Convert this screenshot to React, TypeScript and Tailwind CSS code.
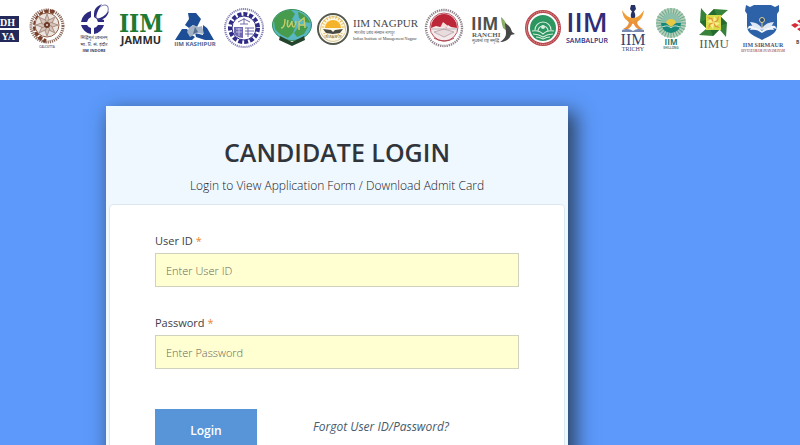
import React from 'react';

interface LogoProps {
  name: string;
  box: string;
  className: string;
  children: React.ReactNode;
}

const Logo: React.FC<LogoProps> = ({ name, box, className, children }) => (
  <svg role="img" aria-label={name} viewBox={box} className={`h-15 shrink-0 ${className}`}>
    {children}
  </svg>
);

const spin = (count: number, cx: number, cy: number, shape: React.ReactNode) =>
  Array.from({ length: count }, (_, i) => (
    <g key={i} transform={`rotate(${(360 / count) * i} ${cx} ${cy})`}>{shape}</g>
  ));

const sans = '"Open Sans", "Noto Sans", sans-serif';
const serif = '"Liberation Serif", serif';

const LogoStrip: React.FC = () => (
  <div className="flex items-start overflow-hidden">
    <Logo name="IIM Bodh Gaya" box="0 0 24 60" className="w-6">
      <rect x="0" y="16" width="19" height="12" fill="#23295a" />
      <rect x="0" y="30" width="19" height="12" fill="#23295a" />
      <g fill="#fff" fontFamily={serif} fontWeight="700" fontSize="10" textAnchor="end">
        <text x="15" y="26">DH</text>
        <text x="15" y="40">YA</text>
      </g>
    </Logo>

    <Logo name="IIM Calcutta" box="24 0 49 60" className="w-[49px]">
      <circle cx="47" cy="26" r="16" fill="none" stroke="#8b6a5c" strokeWidth="3" strokeDasharray="1.2 .9" />
      <path d="M54 12A15 15 0 1 0 46 41" fill="none" stroke="#7a3f2b" strokeWidth="4" strokeDasharray="4 1.5" />
      <circle cx="47" cy="25" r="12" fill="#ece4de" stroke="#94634e" strokeWidth="1" />
      {spin(8, 47, 25, <path d="M47 14l2.6 7-2.6 4-2.6-4z" fill="#d5c3b8" stroke="#95766a" strokeWidth=".7" />)}
      <circle cx="47" cy="25" r="3" fill="#6d3828" />
      <circle cx="47" cy="25" r="1" fill="#e8dcd4" />
      <text x="47" y="48" fontFamily={sans} fontWeight="700" fontSize="3" fill="#8c675a" textAnchor="middle">CALCUTTA</text>
    </Logo>

    <Logo name="IIM Indore" box="73 0 42 60" className="w-[42px]">
      <g fill="#2c2b80">
        <path d="M91 11v6a7 7 0 0 0-4 5h-6a13 13 0 0 1 10-11z" />
        <path d="M81 25h6a7 7 0 0 0 4 3v6a13 13 0 0 1-10-9z" />
        <path d="M94 34v-6a7 7 0 0 0 4-3h6a13 13 0 0 1-10 9z" />
        <path d="M94 12l3 5 7 3v2h-6a7 7 0 0 0-4-5z" />
      </g>
      <ellipse cx="102" cy="12" rx="5" ry="8" transform="rotate(38 102 12)" fill="#fff" stroke="#7b7aaf" strokeWidth="1" />
      <path d="M96 17c-4-5-1-10 6-13-4 5-5 9-6 13z" fill="#2c2b80" />
      <path d="M97 19c5 2 10-1 12-8-4 5-8 7-12 8z" fill="#2c2b80" />
      <g fontFamily={sans} fill="#37364f" textAnchor="middle">
        <text x="94" y="39" fontSize="4">सिद्धिमूलं प्रबन्धनम्</text>
        <text x="94" y="46" fontSize="5">भा. प्र. सं. इंदौर</text>
        <text x="94" y="52" fontWeight="700" fontSize="4">IIM INDORE</text>
      </g>
    </Logo>

    <Logo name="IIM Jammu" box="115 0 54 60" className="w-[54px]">
      <text x="141" y="32" fontFamily={'"DejaVu Serif Condensed", "DejaVu Serif", serif'} fontWeight="700" fontSize="24" fill="#1f7a34" textAnchor="middle">IIM</text>
      <text x="141" y="44" fontFamily={sans} fontWeight="700" fontSize="11" fill="#2b2d2e" textAnchor="middle">JAMMU</text>
    </Logo>

    <Logo name="IIM Kashipur" box="169 0 52 60" className="w-[52px]">
      <path d="M188 13h8l5 6-4 8-4-2-4 3-4-3 4-6z" fill="#1d4e95" />
      <path d="M203 25l4 3 7 12h-9l-9-3-1-4 8 2z" fill="#1d4e95" />
      <path d="M175 40l7-11h5l3 5 5 3-3 3z" fill="#1d4e95" />
      <path d="M189 28l4-3 5 2 4-1 2 8-7-1-7 4-3-5z" fill="#a3b2c5" />
      <path d="M195 27l3 5-5 2z" fill="#566f91" />
      <text x="195" y="46" fontFamily={sans} fontWeight="700" fontSize="6" fill="#4a6794" textAnchor="middle">IIM KASHIPUR</text>
    </Logo>

    <Logo name="IIM Visakhapatnam" box="221 0 48 60" className="w-12">
      <circle cx="244" cy="28" r="19" fill="none" stroke="#8380b8" strokeWidth="2" strokeDasharray="1.2 .8" />
      <circle cx="244" cy="28" r="14" fill="#fff" stroke="#2f2c86" strokeWidth="4" strokeDasharray="4 1.9" />
      <circle cx="244" cy="28" r="12" fill="#fff" stroke="#2f2c86" strokeWidth="1" />
      <path d="M238 22l6-3 6 3M244 18v6M240 24h8" fill="none" stroke="#6f6cab" strokeWidth="1" />
      <path d="M234 27h9v11c-5 0-8-3-9-5z" fill="#6d67b0" />
      <path d="M236 29h6M236 32h6M239 28v8" stroke="#d7d5ec" strokeWidth=".8" />
      <path d="M245 28h9M245 31h9M245 34h8M248 28v9" stroke="#5e5aa2" strokeWidth=".9" />
    </Logo>

    <Logo name="IIM Amritsar" box="269 0 46 60" className="w-[46px]">
      <ellipse cx="292" cy="25" rx="19.5" ry="15.5" fill="#58b7c4" stroke="#368e58" strokeWidth="1" />
      <path d="M274 20c4-7 11-10 17-10l4 4-3 5 4 6-3 8-5 5c-6-2-10-5-13-9z" fill="#469b4d" />
      <path d="M298 12c6 2 11 6 12 11l-5-1-6-4zM300 25l8 2-4 7-7 3-3-4z" fill="#469b4d" />
      <path d="M281 28c3 0 4-4 4-9M288 20c-2 9 1 9 4 1 0 8 3 8 4 0M299 30v-8l5-4 1 10M299 25h5" fill="none" stroke="#c3cb6b" strokeWidth="1.5" />
      <path d="M280 36l12 6 12-6 1 4-13 6-13-6z" fill="#24442c" />
    </Logo>

    <Logo name="IIM Nagpur" box="315 0 106 60" className="w-[106px]">
      <circle cx="333" cy="29" r="15" fill="#fff" stroke="#55594c" strokeWidth="2" />
      <circle cx="333" cy="29" r="12.5" fill="#fff8e5" stroke="#d8c893" strokeWidth="1" />
      <path d="M325 28a8 8 0 0 1 16 0z" fill="#f4b32b" />
      {spin(20, 333, 27, <path d="M333 15.5v3" stroke="#edb747" strokeWidth="1" />)}
      <path d="M321 29h24v4h-24z" fill="#fff8e5" />
      <path d="M323 29l8 1 2 2 2-2 8-1-3 4-7 1-7-1z" fill="#4a4b44" />
      <text x="333" y="38" fontFamily={sans} fontSize="3" fill="#66634f" textAnchor="middle">IIM NAGPUR</text>
      <text x="353" y="27" fontFamily={serif} fontSize="11" fill="#47484b">IIM NAGPUR</text>
      <text x="354" y="34" fontFamily={sans} fontSize="4" fill="#66686b">भारतीय प्रबंध संस्थान नागपुर</text>
      <text x="353" y="40" fontFamily={serif} fontSize="4" fill="#3b3d40">Indian Institute of Management Nagpur</text>
    </Logo>

    <Logo name="IIM Rohtak" box="421 0 47 60" className="w-[47px]">
      <circle cx="444" cy="28" r="18" fill="none" stroke="#8d8289" strokeWidth="2.4" strokeDasharray="1.3 .9" />
      <circle cx="444" cy="27" r="14" fill="#f4eaeb" stroke="#ba5863" strokeWidth="1" />
      <path d="M431 28a13 14 0 0 1 26 0l-6-1-3-2-2 3-3-3-3 2-4-1z" fill="#bd2638" />
      <path d="M443 22l5 4-3 2-4-2z" fill="#f7dede" />
      <path d="M431 29h26M434 32l10-3 10 3-10 5z" fill="#e9dcde" stroke="#a6979c" strokeWidth=".7" />
      <path d="M434 38c7 4 14 4 20 0" fill="none" stroke="#ad4451" strokeWidth="1" />
    </Logo>

    <Logo name="IIM Ranchi" box="468 0 51 60" className="w-[51px]">
      <text x="471" y="30" fontFamily={sans} fontWeight="700" fontSize="17" fill="#4d504d">IIM</text>
      <text x="472" y="37" fontFamily={serif} fontWeight="700" fontSize="7" fill="#5b5d5b">RANCHI</text>
      <text x="472" y="42" fontFamily={sans} fontSize="4" fill="#505350">सुप्रबन्धे राष्ट्र समृद्धि</text>
      <path d="M501 17c5 4 7 9 7 15l-5-4c-1-4-2-7-2-11z" fill="#8cad67" />
      <path d="M505 23c4 2 6 5 7 9l3 2-4 1c-2 5-6 7-11 7 4-3 6-5 6-9 0-4-1-7-1-10z" fill="#454846" />
    </Logo>

    <Logo name="IIM Raipur" box="519 0 45 60" className="w-[45px]">
      <circle cx="543" cy="28" r="16.5" fill="#fff" stroke="#b6464d" strokeWidth="3" />
      <circle cx="543" cy="28" r="16.5" fill="none" stroke="#edb2a6" strokeWidth="1" strokeDasharray="1 1" />
      <circle cx="543" cy="28" r="13" fill="#2c9560" />
      <g fill="none" stroke="#d9eee0" strokeWidth="1.1">
        <path d="M535 30a8 8 0 1 1 16 0M538 31a5 5 0 1 1 10 0" />
        <path d="M532 31c5-1 8 0 11 3 3-3 6-4 11-3M533 34c4 0 7 1 10 3 3-2 6-3 10-3M536 37c3 0 5 1 7 2 2-1 4-2 7-2" />
      </g>
      <circle cx="543" cy="27" r="2" fill="#d9eee0" />
    </Logo>

    <Logo name="IIM Sambalpur" box="564 0 52 60" className="w-[52px]">
      <text x="587" y="32" fontFamily={sans} fontWeight="600" fontSize="27" fill="#302c78" textAnchor="middle">IIM</text>
      <text x="587" y="43" fontFamily={sans} fontWeight="600" fontSize="7" fill="#302c78" textAnchor="middle">SAMBALPUR</text>
    </Logo>

    <Logo name="IIM Trichy" box="616 0 36 60" className="w-9">
      <path d="M631 5h4l1 4-3 4-3-4z" fill="#263166" />
      <path d="M633 10c-3 4-3 7 0 11 3-4 3-7 0-11z" fill="#263166" />
      <path d="M622 10c1 8 4 11 11 14 7-3 10-6 11-14-3 5-7 8-11 8s-8-3-11-8z" fill="#ee9d38" />
      <path d="M628 19c2 5 0 7-5 10h5c3-2 4-4 5-7 1 3 2 5 5 7h5c-5-3-7-5-5-10l-5 3z" fill="#e9913c" />
      <path d="M622 30c5-2 8-1 11 1 3-2 6-3 11-1v2h-22z" fill="#7889b2" />
      <text x="633" y="45" fontFamily={serif} fontSize="16" fill="#344670" textAnchor="middle">IIM</text>
      <text x="633" y="51" fontFamily={serif} fontSize="6" fill="#344670" textAnchor="middle">TRICHY</text>
    </Logo>

    <Logo name="IIM Shillong" box="652 0 41 60" className="w-[41px]">
      <circle cx="671" cy="23" r="15" fill="#b5cfb9" />
      {spin(28, 671, 23, <path d="M671 8v6" stroke="#69a98d" strokeWidth="1" />)}
      <path d="M661 23a10 10 0 0 0 20 0z" fill="#15877b" />
      <path d="M661 23a10 10 0 0 1 20 0z" fill="#8bbfac" />
      <path d="M666 23a5 4 0 0 1 10 0l-5 4z" fill="#e7c943" />
      <path d="M662 27c5-2 7-1 9 1 2-2 4-3 9-1" fill="none" stroke="#d5e9db" strokeWidth="1" />
      <text x="671" y="45" fontFamily={sans} fontWeight="700" fontSize="8" fill="#27796a" textAnchor="middle">IIM</text>
      <text x="671" y="49" fontFamily={sans} fontWeight="700" fontSize="3" fill="#4d7b70" textAnchor="middle">SHILLONG</text>
    </Logo>

    <Logo name="IIM Udaipur" box="693 0 42 60" className="w-[42px]">
      {spin(4, 713.5, 22.5, <path d="M706 17l8-8 14 1-7 6z" fill="#37823a" />)}
      {spin(4, 713.5, 22.5, <path d="M714 9l3 7-10 0z" fill="#256a2e" />)}
      <path d="M706 15h15v15h-15z" fill="#d8dc49" />
      {spin(4, 713.5, 22.5, <path d="M713 22l-6-5 5 1 2 4z" fill="#e9933b" />)}
      {spin(4, 713.5, 22.5, <path d="M713 22l1-6 3 4z" fill="#f8ee8a" />)}
      <text x="714" y="48" fontFamily={serif} fontSize="13" fill="#4f5f57" textAnchor="middle">IIMU</text>
    </Logo>

    <Logo name="IIM Sirmaur" box="735 0 55 60" className="w-[55px]">
      <path d="M746 5l4 2 4-2h17l4 2 4-2 0 6-2 3v12c0 8-8 10-15 14-7-4-15-6-15-14V14l-2-3z" fill="#2d62a9" />
      <path d="M762 31c-3-4-8-6-13-5l-2 3 4-1-1 2c5-1 8 0 12 3 4-3 7-4 12-3l-1-2 4 1-2-3c-5-1-10 1-13 5z" fill="#f3f7fc" />
      <path d="M750 22c5 0 9 2 12 6 3-4 7-6 12-6l-3 5-9 3-9-3z" fill="#dfeaf6" />
      <circle cx="762" cy="20" r="2.5" fill="#284a79" stroke="#d9cf95" strokeWidth="1" />
      <path d="M762 22v6" stroke="#ddc87a" strokeWidth="1" />
      <text x="763" y="47" fontFamily={serif} fontWeight="700" fontSize="6" fill="#4b5574" textAnchor="middle">IIM SIRMAUR</text>
      <text x="763" y="52" fontFamily={serif} fontWeight="700" fontSize="3" fill="#a45b64" textAnchor="middle">DIVYATAMAM JNANAMAYAM</text>
    </Logo>

    <Logo name="IIM Bangalore" box="790 0 30 60" className="w-[30px]">
      <path d="M791 25l4-2 4 2-4 3z" fill="#d62a36" />
      <path d="M797 21l4-2 4 2-4 3zM797 29l4-2 4 2-4 3zM799 25l4-2 4 2-4 3z" fill="#d62a36" />
      <text x="796" y="44" fontFamily={sans} fontWeight="700" fontSize="5" fill="#4c4c4c">B</text>
    </Logo>
  </div>
);

interface FieldProps {
  id: string;
  label: string;
  type: string;
}

const Field: React.FC<FieldProps> = ({ id, label, type }) => (
  <div className="mb-7">
    <label htmlFor={id} className="mb-1 block text-[11px] leading-4 text-[#3d4047]">
      {label} <span className="text-[#e8862e]">*</span>
    </label>
    <input
      id={id}
      type={type}
      placeholder={`Enter ${label}`}
      className="block h-[34px] w-full border border-[#cfd2bd] bg-[#ffffd2] px-2.5 text-[11px] font-light text-gray-700 outline-none placeholder:text-[#66665a]"
    />
  </div>
);

export default function App() {
  return (
    <div className="flex h-screen flex-col overflow-hidden bg-white font-['Open_Sans',sans-serif]">
      <header className="h-20 shrink-0">
        <LogoStrip />
      </header>

      <main className="flex-1 bg-[#5c99fa]">
        <div className="mt-[26px] ml-[106px] w-[462px] max-w-full bg-[#eff7ff] px-[3px] pb-1 shadow-[6px_8px_18px_2px_rgba(30,40,50,0.75)]">
          <div className="pt-7 pb-2 text-center">
            <h1 className="text-[25px] leading-9 font-semibold text-[#30343b]">CANDIDATE LOGIN</h1>
            <p className="mt-1.5 text-xs leading-5 font-light text-[#15181d]">
              Login to View Application Form / Download Admit Card
            </p>
          </div>

          <form
            className="rounded-t-sm border border-[#dde7ef] bg-white px-[45px] pt-7 pb-10"
            onSubmit={(e) => e.preventDefault()}
          >
            <Field id="user-id" label="User ID" type="text" />
            <Field id="password" label="Password" type="password" />

            <div className="mt-10 flex items-start">
              <button type="submit" className="h-11 w-[102px] bg-[#5795d8] text-xs font-semibold text-white">
                Login
              </button>
              <a href="#forgot" className="mt-2 ml-14 text-xs leading-5 text-[#465a6c] italic">
                Forgot User ID/Password?
              </a>
            </div>
          </form>
        </div>
      </main>
    </div>
  );
}
